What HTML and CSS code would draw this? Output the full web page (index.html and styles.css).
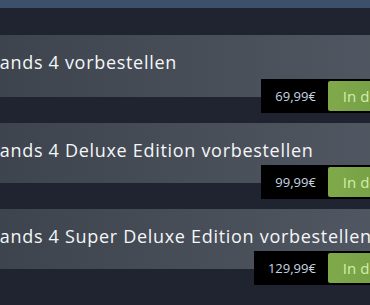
FILE: index.html
```html
<!DOCTYPE html>
<html lang="de">
<head>
    <meta charset="UTF-8">
    <meta name="viewport" content="width=device-width, initial-scale=1.0">
    <title>Borderlands 4 vorbestellen</title>
    <link rel="stylesheet" href="styles.css">
</head>
<body>
    <div class="topbar"></div>

    <div class="purchase-list">
        <div class="purchase-card">
            <h1 class="purchase-title">Borderlands 4 vorbestellen</h1>
            <div class="purchase-action">
                <div class="purchase-price">69,99€</div>
                <a class="btn-cart" href="#">In den Warenkorb</a>
            </div>
        </div>

        <div class="purchase-card">
            <h1 class="purchase-title">Borderlands 4 Deluxe Edition vorbestellen</h1>
            <div class="purchase-action">
                <div class="purchase-price">99,99€</div>
                <a class="btn-cart" href="#">In den Warenkorb</a>
            </div>
        </div>

        <div class="purchase-card">
            <h1 class="purchase-title">Borderlands 4 Super Deluxe Edition vorbestellen</h1>
            <div class="purchase-action">
                <div class="purchase-price">129,99€</div>
                <a class="btn-cart" href="#">In den Warenkorb</a>
            </div>
        </div>
    </div>
</body>
</html>
```

FILE: styles.css
```css
body {
    margin: 0;
    background-color: #1f2430;
    font-family: "Open Sans", Arial, sans-serif;
    overflow: hidden;
}

.topbar {
    height: 8px;
    background-color: #3d506b;
}

.purchase-list {
    padding-top: 27px;
    margin-left: -84px;
    width: 586px;
}

.purchase-card {
    position: relative;
    padding: 16px 16px 22px;
    margin-bottom: 26px;
    background: linear-gradient(to right, #3a4049, #575d68);
}

.purchase-card:first-child {
    padding-bottom: 24px;
}

.purchase-title {
    margin: 0;
    font-size: 18px;
    line-height: 22px;
    font-weight: normal;
    letter-spacing: 0.7px;
    color: #f4f6f8;
    white-space: nowrap;
}

/* price + button box hanging over the bottom edge */
.purchase-action {
    position: absolute;
    right: 16px;
    bottom: -16px;
    display: flex;
    align-items: center;
    height: 30px;
    padding: 2px;
    background-color: #000;
}

.purchase-price {
    padding: 0 12px;
    font-size: 13px;
    color: #c7d5e0;
}

.btn-cart {
    height: 30px;
    line-height: 30px;
    padding: 0 15px;
    border-radius: 2px;
    background: linear-gradient(to right, #7ea84a 5%, #5f8d36 95%);
    color: #d2efa9;
    font-size: 15px;
    text-decoration: none;
}
```
